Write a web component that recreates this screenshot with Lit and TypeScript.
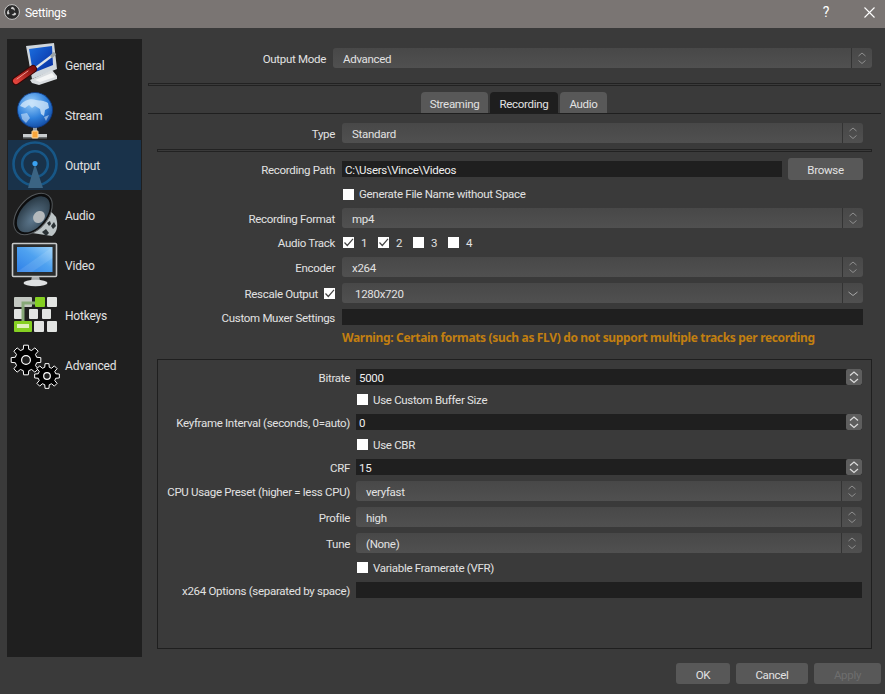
import { LitElement, html, css, svg } from "lit";
import { customElement } from "lit/decorators.js";

function gear(cx: number, cy: number, ro: number, ri: number, teeth: number) {
  const pts: string[] = [];
  const step = (Math.PI * 2) / teeth;
  for (let i = 0; i < teeth; i++) {
    const a = i * step - Math.PI / 2;
    const w = step * 0.2;
    const list: [number, number][] = [
      [ri, a - step * 0.32],
      [ro, a - w],
      [ro, a + w],
      [ri, a + step * 0.32],
    ];
    for (const [r, t] of list) {
      pts.push(`${(cx + r * Math.cos(t)).toFixed(2)},${(cy + r * Math.sin(t)).toFixed(2)}`);
    }
  }
  return pts.join(" ");
}

const icons: Record<string, unknown> = {
  General: svg`<svg class="icon" viewBox="0 0 54 50">
    <defs><linearGradient id="gs" x1="0" y1="0" x2="1" y2="1"><stop offset="0" stop-color="#1b6fe0"/><stop offset="1" stop-color="#062a9c"/></linearGradient>
    <linearGradient id="gr" x1="0" y1="1" x2="1" y2="0"><stop offset="0" stop-color="#e0433c"/><stop offset="1" stop-color="#7e0f0c"/></linearGradient></defs>
    <path d="M18 6 L46 3 L49 29 L24 39 Z" fill="#cfd6dc"/>
    <path d="M21 9 L44 6 L45 25 L25 33 Z" fill="url(#gs)"/>
    <path d="M22 40 L44 30 L49 36 L49 39 L31 45 L24 43 Z" fill="#d9dde0"/>
    <path d="M27 40 L44 33 L47 37 L32 42 Z" fill="#f4f5f5"/>
    <path d="M25 30 L45 15" stroke="#dfe3e6" stroke-width="2.2"/>
    <path d="M43 17 L47 13" stroke="#9aa3a8" stroke-width="3.4"/>
    <path d="M8 41 L25 29" stroke="#3a0504" stroke-width="8" stroke-linecap="round"/>
    <path d="M8 41 L25 29" stroke="url(#gr)" stroke-width="6" stroke-linecap="round"/>
    <path d="M9 39 L20 31" stroke="#f19a92" stroke-width="1" stroke-linecap="round"/>
  </svg>`,
  Stream: svg`<svg class="icon" viewBox="0 0 54 50">
    <defs><radialGradient id="gl" cx=".4" cy=".3" r=".8"><stop offset="0" stop-color="#9cd0fa"/><stop offset=".55" stop-color="#2f80db"/><stop offset="1" stop-color="#0c3f96"/></radialGradient></defs>
    <rect x="25" y="34" width="4" height="8" fill="#9aa0a4"/>
    <circle cx="27" cy="20" r="17.5" fill="url(#gl)" stroke="#0d3a85" stroke-width=".8"/>
    <path d="M12 16 C15 10 23 8 28 10 C33 11 35 10 40 13 L41 18 L37 20 L36 26 L33 24 L32 19 L27 16 L24 18 L21 15 L17 18 Z" fill="#d8ebfb" opacity=".75"/>
    <path d="M13 24 L19 23 L22 28 L18 33 L14 29 Z" fill="#d8ebfb" opacity=".55"/>
    <path d="M36 27 L41 25 L38 31 Z" fill="#d8ebfb" opacity=".55"/>
    <rect x="15" y="44" width="24" height="3" fill="#c8ccce"/>
    <rect x="15" y="47" width="24" height="1.5" fill="#6a6e70"/>
    <rect x="24" y="41" width="6" height="7" rx=".5" fill="#f8a53a" stroke="#ffdca0" stroke-width="1"/>
  </svg>`,
  Output: svg`<svg class="icon" viewBox="0 0 54 50">
    <circle cx="27" cy="24" r="21.5" fill="none" stroke="#175787" stroke-width="2.6"/>
    <circle cx="27" cy="24" r="12.8" fill="none" stroke="#175787" stroke-width="2.6"/>
    <path d="M27 24 L20 48 L35 48 Z" fill="#3b6483"/>
    <circle cx="27" cy="23.5" r="2.6" fill="#3aa2f2"/>
  </svg>`,
  Audio: svg`<svg class="icon" viewBox="0 0 54 50">
    <defs><radialGradient id="ga" cx=".6" cy=".6" r=".7"><stop offset="0" stop-color="#5f7a90"/><stop offset="1" stop-color="#25343f"/></radialGradient></defs>
    <path d="M24 43 L44 46 C50 42 50 34 48 27 L36 14 Z" fill="#bcc4c6"/>
    <path d="M34 42 l4 -3 l3 4 l-3 3 Z M43 36 l3 -4 l2 4 l-3 3 Z M39 33 l3 -2 l1 3 l-2 2 Z" fill="#2a3134"/>
    <ellipse cx="25" cy="24" rx="15" ry="24" transform="rotate(40 25 24)" fill="#0c0d0e" stroke="#55595c" stroke-width="1"/>
    <ellipse cx="25.500" cy="24" rx="12.500" ry="21" transform="rotate(40 25 24)" fill="url(#ga)"/>
    <ellipse cx="31" cy="27" rx="5.500" ry="6.500" transform="rotate(40 31 27)" fill="#b4b9bc"/>
  </svg>`,
  Video: svg`<svg class="icon" viewBox="0 0 54 50">
    <defs><linearGradient id="gv" x1="0" y1="1" x2="1" y2="0"><stop offset="0" stop-color="#2f80e8"/><stop offset=".55" stop-color="#4fa2f0"/><stop offset="1" stop-color="#9ad2fa"/></linearGradient></defs>
    <path d="M24 36 h7 l1 5 h-9 Z" fill="#a7abad"/>
    <ellipse cx="27.500" cy="43" rx="12" ry="3.200" fill="#dfe1e2"/>
    <rect x="4.500" y="3.500" width="44" height="33" rx="1" fill="#2a2c2d" stroke="#c7c9ca" stroke-width="1.600"/>
    <rect x="9" y="7" width="35.500" height="25" fill="url(#gv)"/>
    <path d="M9 32 L44.500 7 L44.500 18 L24 32 Z" fill="#fff" opacity=".1"/>
  </svg>`,
  Hotkeys: svg`<svg class="icon" viewBox="0 0 54 50">
    <defs><filter id="bl" x="-10%" y="-10%" width="120%" height="120%"><feGaussianBlur stdDeviation=".7"/></filter></defs>
    <g filter="url(#bl)" fill="#e2e4e2">
      <rect x="6" y="7" width="18" height="10" rx="1" fill="#c4c8c2"/>
      <rect x="27" y="7" width="10" height="10" rx="1" fill="#85d021"/>
      <rect x="39" y="7" width="10" height="10" rx="1"/>
      <rect x="6" y="19" width="9" height="10" rx="1"/>
      <rect x="21" y="19" width="9" height="10" rx="1"/>
      <rect x="34" y="19" width="9" height="10" rx="1"/>
      <rect x="6" y="31" width="18" height="11" rx="1" fill="#85d021"/>
      <rect x="26" y="31" width="10" height="11" rx="1"/>
      <rect x="39" y="31" width="10" height="11" rx="1"/>
      <rect x="9" y="34" width="12" height="4" fill="#e0f0c0"/>
      <path d="M15 31 V13 H27" stroke="#87a878" stroke-width="3" fill="none"/>
    </g>
  </svg>`,
  Advanced: svg`<svg class="icon" viewBox="0 0 54 50">
    <polygon points="${gear(18, 20, 15, 11, 8)}" fill="#000" stroke="#fff" stroke-width="1"/>
    <circle cx="18" cy="20" r="4.400" fill="#1f1f1f" stroke="#fff" stroke-width="1.200"/>
    <polygon points="${gear(39, 36, 12.500, 9, 8)}" fill="#000" stroke="#fff" stroke-width="1"/>
    <circle cx="39" cy="36" r="3.300" fill="#1f1f1f" stroke="#fff" stroke-width="1.200"/>
  </svg>`,
};

const pages = ["General", "Stream", "Output", "Audio", "Video", "Hotkeys", "Advanced"];

@customElement("app-root")
export class AppRoot extends LitElement {
  static styles = css`
    :host {
      display: block;
      width: 885px;
      height: 694px;
      background: #3a3a3a;
      color: #e2e2e2;
      font-family: Roboto, "Noto Sans", sans-serif;
      font-size: 11.5px;
      letter-spacing: -0.3px;
      line-height: 14px;
      overflow: hidden;
    }
    .lab, .v, .tab, .btn, .item span, .input span, .name { padding-top: 2px; }
    .lab.np { padding-top: 0; }
    .titlebar {
      height: 28px;
      background: #7a7573;
      display: flex;
      align-items: center;
      padding: 0 10px 4px 4px;
      box-sizing: border-box;
      color: #fff;
      font-size: 12px;
    }
    .logo { width: 16px; height: 16px; margin-right: 5px; }
    .titlebar .name { flex: 1; }
    .help { font-size: 14px; margin-right: 35px; }
    .close { width: 11px; height: 11px; }
    .content {
      display: grid;
      grid-template-columns: 135px 733px;
      column-gap: 6px;
      padding: 11px 0 0 7px;
      align-items: start;
    }
    .sidebar {
      background: #1f1f1f;
      height: 618px;
      padding: 1px;
      box-sizing: border-box;
    }
    .item {
      height: 50px;
      display: flex;
      align-items: center;
      gap: 3px;
      font-size: 12px;
      letter-spacing: -0.2px;
    }
    .item.sel { background: #19324a; }
    .icon { width: 54px; height: 50px; display: block; flex: none; }
    .main { padding-top: 9px; }
    .grid { display: grid; row-gap: 6px; align-items: center; }
    .lab { text-align: right; white-space: nowrap; }
    .top { grid-template-columns: 178px 539px; column-gap: 7px; }
    .dbl {
      height: 1px;
      border: 1px solid #222;
      background: #3a3a3a;
    }
    .main > .dbl { margin: 15px 0 6px; }
    .tabs {
      display: flex;
      gap: 2px;
      padding-left: 273px;
      height: 21px;
      border-bottom: 1px solid #1f1f1f;
    }
    .tab {
      background: #585858;
      border-radius: 4px 4px 0 0;
      display: flex;
      align-items: center;
      justify-content: center;
      box-sizing: border-box;
    }
    .tab.on { background: #1e1e1e; }
    .pane { margin: 9px 9px 0; }
    .form { grid-template-columns: 185px 521px 9px; }
    .form .lab { padding-right: 7px; }
    .form > .wide { grid-column: 1 / -1; }
    .form > .ctl { grid-column: 2; }
    .combo {
      height: 20px;
      background: linear-gradient(#484848, #505050);
      border-radius: 3px;
      display: flex;
      align-items: center;
      padding-left: 10px;
    }
    .combo.edit { padding-left: 13px; }
    .combo .v { flex: 1; }
    .arrows {
      width: 20px;
      height: 20px;
      border-left: 1px solid #333;
      display: block;
      flex: none;
    }
    .input {
      height: 16px;
      background: #1f1f1f;
      padding-left: 3px;
      display: flex;
      align-items: center;
      box-sizing: border-box;
      color: #eee;
    }
    .spin { height: 16px; width: 16px; background: #5e5e5e; border-radius: 2px; margin-left: auto; flex: none; display: block; }
    .pathrow { display: flex; gap: 6px; align-items: center; }
    .pathrow .input { flex: 1; }
    .btn {
      background: #585858;
      border-radius: 3px;
      height: 21px;
      display: flex;
      align-items: center;
      justify-content: center;
      box-sizing: border-box;
    }
    .browse { width: 75px; height: 22px; flex: none; }
    .chk {
      display: flex;
      align-items: center;
      gap: 5px;
      height: 16px;
      padding-left: 1px;
    }
    .chk.tall { height: 17px; }
    .box {
      width: 11px;
      height: 11px;
      background: #fff;
      display: block;
      flex: none;
    }
    .tracks { display: flex; height: 17px; align-items: center; padding-left: 1px; }
    .tracks label { width: 35px; display: flex; align-items: center; gap: 7px; }
    .lab.withbox { display: flex; justify-content: flex-end; align-items: center; gap: 6px; padding-top: 0; }
    .lab.withbox span { padding-top: 2px; }
    .warn {
      color: #c27f10;
      font-family: "Noto Sans", Roboto, sans-serif;
      font-size: 12px;
      font-weight: 700;
      letter-spacing: -0.34px;
      height: 16px;
      line-height: 14px;
      white-space: nowrap;
    }
    .group {
      margin-top: 12px;
      border: 1px solid #1f1f1f;
      height: 290px;
      box-sizing: border-box;
      padding-top: 9px;
    }
    .gform { grid-template-columns: 192px 506px; column-gap: 6px; }
    .gform > .ctl { grid-column: 2; }
    .footer {
      display: flex;
      justify-content: flex-end;
      gap: 6px;
      padding-top: 6px;
      grid-column: 1 / -1;
    }
    .ok { width: 54px; }
    .cancel { width: 72px; }
    .apply { width: 67px; color: #6e6e6e; }
  `;

  private arrows() {
    return svg`<svg class="arrows" viewBox="0 0 20 20"><path d="M6.500 8 L10 5 L13.500 8 M6.500 12.500 L10 15.500 L13.500 12.500" fill="none" stroke="#8f8f8f" stroke-width="1"/></svg>`;
  }
  private chevron() {
    return svg`<svg class="arrows" viewBox="0 0 20 20"><path d="M5.500 9 L10 12.500 L14.500 9" fill="none" stroke="#a8a8a8" stroke-width="1"/></svg>`;
  }
  private spin() {
    return svg`<svg class="spin" viewBox="0 0 16 16"><path d="M4 6.500 L8 3 L12 6.500 M4 10 L8 13.500 L12 10" fill="none" stroke="#dcdcdc" stroke-width="1.200"/></svg>`;
  }
  private box(checked = false) {
    return svg`<svg class="box" viewBox="0 0 11 11">${
      checked ? svg`<path d="M1.500 5.500 L4.300 8.500 L10 1.800" fill="none" stroke="#444" stroke-width="1.200"/>` : ""
    }</svg>`;
  }
  private combo(v: string) {
    return html`<div class="combo"><span class="v">${v}</span>${this.arrows()}</div>`;
  }
  private check(t: string, cls = "") {
    return html`<div class="ctl chk ${cls}">${this.box()}<span>${t}</span></div>`;
  }
  private spinInput(v: string) {
    return html`<div class="input"><span>${v}</span>${this.spin()}</div>`;
  }

  render() {
    return html`
      <div class="titlebar">
        <svg class="logo" viewBox="0 0 16 16">
          <circle cx="8" cy="8" r="7.400" fill="#2a2a2a" stroke="#d4d4d4" stroke-width=".9"/>
          <path d="M8 2.800 A3 3 0 0 1 10.500 7 A3 3 0 0 0 7 5 A3 3 0 0 1 8 2.800 Z M12.300 10 A3 3 0 0 1 7.600 10.600 A3 3 0 0 0 10.400 8.500 A3 3 0 0 1 12.300 10 Z M3.600 10.500 A3 3 0 0 1 5.100 5.800 A3 3 0 0 0 5.600 9.400 A3 3 0 0 1 3.600 10.500 Z" fill="#cfcfcf"/>
        </svg>
        <span class="name">Settings</span>
        <span class="help">?</span>
        <svg class="close" viewBox="0 0 11 11"><path d="M.5 .5 L10.500 10.500 M10.500 .5 L.5 10.500" stroke="#fff" stroke-width="1.100"/></svg>
      </div>
      <div class="content">
        <nav class="sidebar">
          ${pages.map(
            (p) => html`<div class="item ${p === "Output" ? "sel" : ""}">${icons[p]}<span>${p}</span></div>`
          )}
        </nav>
        <div class="main">
          <div class="grid top">
            <div class="lab">Output Mode</div>
            ${this.combo("Advanced")}
          </div>
          <div class="dbl"></div>
          <div class="tabs">
            <div class="tab" style="width:67px">Streaming</div>
            <div class="tab on" style="width:68px">Recording</div>
            <div class="tab" style="width:47px">Audio</div>
          </div>
          <div class="pane">
            <div class="grid form">
              <div class="lab">Type</div>
              ${this.combo("Standard")}
              <div></div>
              <div class="dbl wide"></div>
              <div class="lab">Recording Path</div>
              <div class="pathrow">
                <div class="input"><span>C:\\Users\\Vince\\Videos</span></div>
                <div class="btn browse">Browse</div>
              </div>
              <div></div>
              ${this.check("Generate File Name without Space")}
              <div></div>
              <div class="lab">Recording Format</div>
              ${this.combo("mp4")}
              <div></div>
              <div class="lab np">Audio Track</div>
              <div class="tracks">
                <label>${this.box(true)}<span>1</span></label>
                <label>${this.box(true)}<span>2</span></label>
                <label>${this.box()}<span>3</span></label>
                <label>${this.box()}<span>4</span></label>
              </div>
              <div></div>
              <div class="lab">Encoder</div>
              ${this.combo("x264")}
              <div></div>
              <div class="lab withbox"><span>Rescale Output</span>${this.box(true)}</div>
              <div class="combo edit"><span class="v">1280x720</span>${this.chevron()}</div>
              <div></div>
              <div class="lab">Custom Muxer Settings</div>
              <div class="input"></div>
              <div></div>
              <div class="ctl warn">Warning: Certain formats (such as FLV) do not support multiple tracks per recording</div>
            </div>
            <div class="group">
              <div class="grid gform">
                <div class="lab">Bitrate</div>
                ${this.spinInput("5000")}
                ${this.check("Use Custom Buffer Size", "tall")}
                <div class="lab">Keyframe Interval (seconds, 0=auto)</div>
                ${this.spinInput("0")}
                ${this.check("Use CBR", "tall")}
                <div class="lab">CRF</div>
                ${this.spinInput("15")}
                <div class="lab">CPU Usage Preset (higher = less CPU)</div>
                ${this.combo("veryfast")}
                <div class="lab">Profile</div>
                ${this.combo("high")}
                <div class="lab">Tune</div>
                ${this.combo("(None)")}
                ${this.check("Variable Framerate (VFR)", "tall")}
                <div class="lab">x264 Options (separated by space)</div>
                <div class="input"></div>
              </div>
            </div>
          </div>
        </div>
        <div class="footer">
          <div class="btn ok">OK</div>
          <div class="btn cancel">Cancel</div>
          <div class="btn apply">Apply</div>
        </div>
      </div>
    `;
  }
}
